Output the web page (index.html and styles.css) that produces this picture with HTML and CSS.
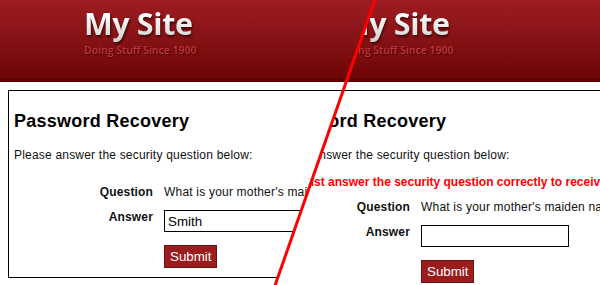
FILE: index.html
```html
<!DOCTYPE html>
<html>
<head>
<meta charset="utf-8">
<link rel="stylesheet" href="styles.css">
</head>
<body>
<div class="stage">
  <div class="page">
    <header class="masthead">
      <div class="brand">
        <div class="site-name">My Site</div>
        <div class="tagline">Doing Stuff Since 1900</div>
      </div>
    </header>
    <div class="box">
      <h2 class="title">Password Recovery</h2>
      <p class="intro">Please answer the security question below:</p>
      <div class="form">
        <div class="error"></div>
        <div class="label">Question</div>
        <div class="value">What is your mother's maiden name?</div>
        <div class="label">Answer</div>
        <div class="value"><input class="answer" type="text" value="Smith"></div>
        <div class="value submit-row"><button class="submit" type="button">Submit</button></div>
      </div>
    </div>
  </div>

  <div class="overlay">
    <div class="page shifted">
      <header class="masthead">
        <div class="brand">
          <div class="site-name">My Site</div>
          <div class="tagline">Doing Stuff Since 1900</div>
        </div>
      </header>
      <div class="box">
        <h2 class="title">Password Recovery</h2>
        <p class="intro">Please answer the security question below:</p>
        <div class="form">
          <div class="error">You must answer the security question correctly to receive your password.</div>
          <div class="label">Question</div>
          <div class="value">What is your mother's maiden name?</div>
          <div class="label">Answer</div>
          <div class="value"><input class="answer" type="text" value=""></div>
          <div class="value submit-row"><button class="submit" type="button">Submit</button></div>
        </div>
      </div>
    </div>
  </div>

  <svg class="divider" width="600" height="285" viewBox="0 0 600 285">
    <line x1="375.5" y1="-2" x2="274.5" y2="287" stroke="#ff0000" stroke-width="3"/>
  </svg>
</div>
</body>
</html>
```

FILE: styles.css
```css
html, body {
  margin: 0;
  padding: 0;
  background: #ffffff;
}

.stage {
  position: relative;
  width: 600px;
  height: 285px;
  overflow: hidden;
  font-family: "Liberation Sans", Arial, sans-serif;
}

.page {
  width: 600px;
  background: #ffffff;
}

.masthead {
  height: 79px;
  border-bottom: 3px solid #5c0000;
  background: linear-gradient(to bottom, #9e1c20 0%, #8a1418 40%, #6e0505 100%);
  padding-left: 84px;
  box-sizing: content-box;
}

.brand {
  padding-top: 4px;
}

.site-name {
  font-family: "Open Sans", "DejaVu Sans", sans-serif;
  font-weight: 700;
  font-size: 30.5px;
  line-height: 38px;
  letter-spacing: -0.4px;
  color: #f4f4f4;
  background: linear-gradient(to bottom, #ffffff 30%, #cfcfcf 100%);
  -webkit-background-clip: text;
  background-clip: text;
  -webkit-text-fill-color: transparent;
  filter: drop-shadow(1px 2px 1px rgba(40, 0, 0, 0.75));
}

.tagline {
  font-family: "Open Sans", "DejaVu Sans", sans-serif;
  font-size: 10.5px;
  font-weight: 600;
  line-height: 14px;
  color: #c4363b;
  text-shadow: 1px 1px 1px rgba(40, 0, 0, 0.8);
  margin-top: 1px;
}

.box {
  margin: 8px 8px 0;
  border: 1px solid #000000;
  padding: 0 5px 9px;
  color: #111111;
}

.title {
  margin: 19px 0 0;
  font-size: 18px;
  font-weight: 700;
  line-height: 22px;
  letter-spacing: 0.25px;
  color: #000000;
}

.intro {
  margin: 16px 0 0;
  font-size: 12px;
  line-height: 15px;
  letter-spacing: 0.2px;
}

.form {
  margin-top: 12px;
  display: grid;
  grid-template-columns: 139px auto;
  column-gap: 11px;
  row-gap: 10px;
  font-size: 12px;
  line-height: 15px;
}

.error {
  grid-column: 1 / -1;
  color: #ff0000;
  font-weight: 700;
  white-space: nowrap;
}

.label {
  grid-column: 1;
  text-align: right;
  font-weight: 700;
  letter-spacing: 0.15px;
  color: #111111;
}

.value {
  grid-column: 2;
  white-space: nowrap;
  letter-spacing: 0.2px;
}

.answer {
  display: block;
  box-sizing: border-box;
  width: 148px;
  height: 22px;
  margin: 0;
  padding: 1px 3px 0;
  border: 1px solid #000000;
  font-family: "Liberation Sans", Arial, sans-serif;
  font-size: 13.33px;
  color: #000000;
  background: #ffffff;
}

.submit-row {
  margin-top: 3px;
}

.submit {
  display: block;
  box-sizing: border-box;
  height: 23px;
  margin: 0;
  padding: 0 5px;
  border: 1px solid #6e1010;
  background: #9b1c1c;
  color: #ffffff;
  font-family: "Liberation Sans", Arial, sans-serif;
  font-size: 13.33px;
  line-height: 21px;
}

.overlay {
  position: absolute;
  left: 0;
  top: 0;
  width: 600px;
  height: 285px;
  overflow: hidden;
  clip-path: polygon(375px 0, 600px 0, 600px 285px, 275px 285px);
}

.shifted {
  margin-left: 257px;
}

.divider {
  position: absolute;
  left: 0;
  top: 0;
  pointer-events: none;
}
```
